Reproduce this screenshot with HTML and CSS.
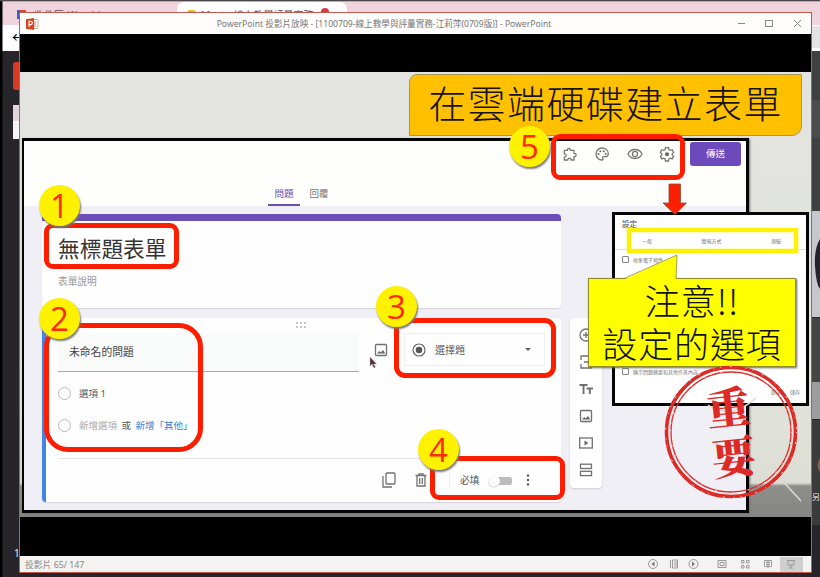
FILE: index.html
```html
<!DOCTYPE html>
<html lang="zh-Hant">
<head>
<meta charset="utf-8">
<title>PowerPoint 投影片放映</title>
<link rel="stylesheet" href="styles.css">
</head>
<body>
<div class="desktop">
  <div class="browser">
    <div class="tabs-strip">
      <div class="btab"><i class="fav mail"></i><span>收件匣 (1) - chiang</span><b>✕</b></div>
      <div class="btab active"><i class="fav meet"></i><span>Meet - 線上教學評量實務</span><i class="rec"></i><b>✕</b></div>
    </div>
    <div class="nav-strip">←</div>
  </div>
  <svg class="backdrop" width="820" height="577" viewBox="0 0 820 577">
    <rect x="13" y="62" width="12" height="28" rx="3" fill="#d83a25"/>
    <rect x="13" y="105" width="8" height="34" fill="#f6f3f5"/><rect x="13" y="105" width="8" height="16" fill="#e3d5da"/>
    <rect x="811" y="26" width="9" height="22" fill="#e4e4e6"/>
    <rect x="811" y="51" width="9" height="160" fill="#3f4040"/><rect x="811" y="100" width="9" height="38" fill="#4b4c4b"/>
    <rect x="811" y="211" width="9" height="106" fill="#c7c8cd"/><path d="M820 239q-6 10-5 27 1 18 5 23z" fill="#26222b"/>
    <rect x="811" y="318" width="9" height="64" fill="#464546"/><rect x="811" y="382" width="9" height="37" fill="#9c9d9e"/>
    <rect x="811" y="420" width="9" height="105" fill="#3a3b3a"/><path d="M820 458q-5 8 0 14z" fill="#806057"/>
    <rect width="2.5" height="577" fill="#000"/><rect width="820" height="1.3" fill="#4c474b"/>
  </svg>
  <span class="peek left">1</span><span class="peek right">另</span>

  <div class="window">
    <div class="titlebar">
      <svg width="13" height="12" viewBox="0 0 13 12"><rect x="6" y="1.5" width="6" height="9" rx="1" fill="#fff" stroke="#dba08f"/><path d="M8 4h2M8 6h2M8 8h2" stroke="#d4522f" stroke-width=".8"/><path d="M0 1.2 8 0v12L0 10.8z" fill="#d4431f"/><path d="M3 9V3.2h1.6a1.6 1.6 0 0 1 0 3.4H3" fill="none" stroke="#fff" stroke-width="1.1"/></svg>
      <span class="wtitle">PowerPoint 投影片放映 - [1100709-線上教學與評量實務-江莉萍(0709版)] - PowerPoint</span>
      <svg class="wctl" width="66" height="10" viewBox="0 0 66 10" fill="none" stroke="#888" stroke-width="1"><path d="M1 4.500h7M57 1l7 7M64 1l-7 7"/><rect x="28.500" y="1.500" width="7" height="6"/></svg>
    </div>

    <div class="stage">
      <div class="slide">
        <div class="banner">在雲端硬碟建立表單</div>

        <div class="form-shot">
          <div class="form-head">
            <div class="head-tools">
              <svg width="16" height="16" viewBox="0 0 24 24"><path d="M3.500 6.500H8V6a2.300 2.300 0 0 1 4.600 0v.5H18V11h.8a2.400 2.400 0 0 1 0 4.800H18V21h-4.300c0-3.600-5-3.600-5 0H3.500v-4.200c3.700 0 3.700-5 0-5z"/></svg>
              <svg width="16" height="16" viewBox="0 0 24 24"><path d="M12 3a9 9 0 1 0 0 18c1.400 0 2-1.300 1.200-2.300-.9-1.200-.2-2.700 1.300-2.700H17a4.500 4.500 0 0 0 4.500-4.500C21.500 6.700 17.200 3 12 3z"/><g class="solid"><circle cx="6.800" cy="12" r="1.500"/><circle cx="9.500" cy="7.800" r="1.500"/><circle cx="14.500" cy="7.800" r="1.500"/><circle cx="17.500" cy="11.500" r="1.500"/></g></svg>
              <svg width="16" height="16" viewBox="0 0 24 24"><path d="M1.500 12C5.500 3 18.500 3 22.500 12 18.500 21 5.500 21 1.500 12z"/><circle cx="12" cy="12" r="3.800"/></svg>
              <svg width="16" height="16" viewBox="0 0 24 24"><path d="M9.700 2.500h4.600l.6 3 2 1.100 2.800-1 2.300 4-2.200 1.900v2l2.200 1.900-2.300 4-2.800-1-2 1.100-.6 3H9.700l-.6-3-2-1.100-2.800 1-2.300-4 2.200-1.900v-2L2 9.600l2.300-4 2.800 1 2-1.100z"/><circle cx="12" cy="12.500" r="3" class="solid"/></svg>
              <span class="send">傳送</span>
            </div>
            <div class="form-tabs"><span class="on">問題</span><span>回覆</span></div>
          </div>
          <div class="form-body">
            <div class="cards">
              <div class="card title-card"><div class="form-title">無標題表單</div><div class="form-desc">表單說明</div></div>
              <div class="card question">
                <svg class="grip" width="12" height="6" viewBox="0 0 12 6"><g fill="#aaa"><circle cx="2" cy="1" r=".9"/><circle cx="6" cy="1" r=".9"/><circle cx="10" cy="1" r=".9"/><circle cx="2" cy="5" r=".9"/><circle cx="6" cy="5" r=".9"/><circle cx="10" cy="5" r=".9"/></g></svg>
                <div class="q-row">
                  <div class="q-field">未命名的問題</div>
                  <svg class="ico" width="14" height="14" viewBox="0 0 14 14"><rect x="1.500" y="1.500" width="11" height="11" rx="1"/><path class="solid" d="M3 10.500 5.200 8l1.500 1.500L9 7l2.300 3.500z"/></svg>
                  <div class="q-type">
                    <svg width="14" height="14" viewBox="0 0 14 14"><circle cx="7" cy="7" r="6" fill="none" stroke="#666" stroke-width="1.200"/><circle cx="7" cy="7" r="3.300" fill="#555"/></svg>
                    <span>選擇題</span><i></i>
                  </div>
                </div>
                <div class="opt"><i></i><span>選項 1</span></div>
                <div class="opt second"><i></i><span class="muted">新增選項</span><span>或</span><span class="link">新增「其他」</span></div>
                <div class="q-foot">
                  <svg class="ico" width="14" height="16" viewBox="0 0 14 16"><rect x="4" y="1" width="9" height="11" rx="1"/><path d="M1 4v11h9"/></svg>
                  <svg class="ico trash" width="12" height="14" viewBox="0 0 12 14"><path d="M.5 2.500h11M4 2V.8h4V2M2 3v10h8V3M4.700 5v6M7.300 5v6"/></svg>
                  <span class="req">必填</span>
                  <svg class="toggle" width="26" height="14" viewBox="0 0 26 14"><rect x="5" y="3" width="20" height="8" rx="2.500" fill="#bcbcbc"/><circle cx="7" cy="7.600" r="6" fill="#ccc"/><circle cx="7" cy="7" r="5.800" fill="#fbfbfb"/></svg>
                  <svg width="4" height="12" viewBox="0 0 4 12" fill="#555"><circle cx="2" cy="1.500" r="1.200"/><circle cx="2" cy="6" r="1.200"/><circle cx="2" cy="10.500" r="1.200"/></svg>
                </div>
              </div>
            </div>
            <div class="side-tools">
              <svg class="ico" width="14" height="14" viewBox="0 0 14 14"><circle cx="7" cy="7" r="6"/><path d="M7 4v6M4 7h6"/></svg>
              <svg class="ico" width="14" height="14" viewBox="0 0 14 14"><path d="M2 5V1h8v2M2 9v4h10V9M5 7h6M9 4.500 11.500 7 9 9.500"/></svg>
              <svg class="ico" width="14" height="14" viewBox="0 0 14 14"><path stroke-width="1.900" d="M.5 3h8M4.500 3v9M7.500 6.500H14M10.800 6.500V12"/></svg>
              <svg class="ico" width="14" height="14" viewBox="0 0 14 14"><rect x="1.500" y="1.500" width="11" height="11" rx="1"/><path class="solid" d="M3 10.500 5.200 8l1.500 1.500L9 7l2.300 3.500z"/></svg>
              <svg class="ico" width="14" height="14" viewBox="0 0 14 14"><rect x=".7" y="2" width="12.600" height="10"/><path class="solid" d="M5.500 4.500 9.500 7l-4 2.500z"/></svg>
              <svg class="ico" width="14" height="14" viewBox="0 0 14 14"><rect x="1.500" y="1.200" width="11" height="4.300"/><rect x="1.500" y="8.300" width="11" height="4.300"/></svg>
            </div>
          </div>
        </div>

        <div class="settings-shot">
          <div class="s-title">設定</div>
          <div class="s-tabs"><span>一般</span><span>簡報方式</span><span>測驗</span></div>
          <div class="s-check"><i></i>收集電子郵件</div>
          <div class="s-check low"><i></i>顯示問題摘要和其他作答內容</div>
          <div class="s-actions"><span>取消</span><span>儲存</span></div>
        </div>

        <svg class="marks" width="790" height="445" viewBox="20 72 790 445">
          <path d="M669 184h11.500v19h6L675 214.500 663 203h6z" fill="#ff1e00" stroke="#8d4a35" stroke-width=".8"/>
          <rect x="629" y="230" width="167" height="21" fill="none" stroke="#fff200" stroke-width="4.500"/>
          <path d="M370 357v9l2-2 2 4 1.500-1-2-3h3z" fill="#50333f" stroke="#b599a3" stroke-width=".4"/>
        </svg>
        <div class="frame f1"></div><div class="frame f2"></div><div class="frame f3"></div><div class="frame f4"></div><div class="frame f5"></div>
        <div class="num n1">1</div><div class="num n2">2</div><div class="num n3">3</div><div class="num n4">4</div><div class="num n5">5</div>

        <div class="callout">
          <svg width="56" height="26" viewBox="0 0 56 26"><path d="M1 26 55 1l-1 25z" fill="#ff0"/><path d="M1 25 55 1l-1 24" fill="none" stroke="#8d8b2c" stroke-width=".8"/></svg>
          <div>注意!!</div><div>設定的選項</div>
        </div>

        <svg class="stamp" width="140" height="140" viewBox="661 362 140 140">
          <path d="M708 405q22 16 48-7M776 474l26 28" fill="none" stroke="#dcdcd5" stroke-width="1.500"/>
          <g fill="none" stroke="#dc2b27"><circle cx="731" cy="432" r="64.500" stroke-width="3.600"/><circle cx="731" cy="432" r="60" stroke-width="1.300"/></g>
          <g fill="none" stroke="#f3dedc" stroke-width="1" stroke-dasharray="1 9 2 14 1 6"><circle cx="731" cy="432" r="65.500"/><circle cx="731" cy="432" r="60.500"/></g>
          <g class="stamp-text" transform="rotate(-6 731 432)"><text x="731" y="424">重</text><text x="731" y="474">要</text></g>
        </svg>
      </div>
    </div>

    <div class="statusbar">
      <span>投影片 65/ 147</span>
      <svg width="168" height="15" viewBox="643 557 168 15" fill="none" stroke="#999">
        <rect x="780" y="557" width="23" height="15" fill="#d0cfcf" stroke="none"/>
        <circle cx="653" cy="564" r="4.500"/><path d="M654.500 561.500 651.500 564l3 2.500z" fill="#777" stroke="none"/>
        <path d="M670.500 560v8M672.500 560h5v8h-5zM674 562h3M674 564h3M674 566h3"/>
        <circle cx="693.500" cy="564" r="4.500"/><path d="M692 561.500 695 564l-3 2.500z" fill="#777" stroke="none"/>
        <path d="M718 560.500h8v7h-8zM720 562.500v3h4v-3zM741.500 560.500h2.500v2.500h-2.500zM746.500 560.500h2.500v2.500h-2.500zM741.500 565.500h2.500v2.500h-2.500zM746.500 565.500h2.500v2.500h-2.500zM764.500 560.500h7v6h-7zM766 562.500h4M766 564.500h4M768 560v8M787 560.500h8M788 561v4h6v-4M791 565v3M789 568h4"/>
      </svg>
    </div>
  </div>
</div>
</body>
</html>
```
FILE: styles.css
```css
* { box-sizing: border-box; }
body { margin: 0; font-family: "Noto Sans", "Noto Sans CJK TC", sans-serif; }
svg { display: block; flex: none; }
i { font-style: normal; display: block; flex: none; }

.desktop { position: relative; width: 820px; height: 577px; overflow: hidden; background: #28252a; }
.tabs-strip { display: flex; height: 25px; padding: 2px 0 0 7px; background: #efd4de; }
.btab { display: flex; gap: 8px; height: 23px; width: 170px; padding: 6px 10px; font-size: 10px; line-height: 14px; color: #555; white-space: nowrap; }
.btab span { flex: 1; }
.btab b { font-weight: 400; }
.btab.active { background: #fff; border-radius: 7px 7px 0 0; padding-right: 6px; gap: 5px; }
.btab.active b { font-size: 8px; }
.fav { width: 9px; height: 9px; margin-top: 2px; }
.mail { background: linear-gradient(90deg, #4259c4 35%, #d9472f 35%); }
.meet { background: #e9b91c; border-radius: 3px; }
.rec { width: 8px; height: 8px; border-radius: 50%; background: #d93a44; }
.nav-strip { height: 26px; padding-left: 12px; background: #fff; font-size: 14px; line-height: 24px; }
.backdrop { position: absolute; left: 0; top: 0; }
.peek { position: absolute; color: #eee; font-size: 10px; }
.peek.left { left: 14px; top: 546px; }
.peek.right { left: 812px; top: 491px; font-size: 8px; }

.window { position: absolute; left: 19px; top: 12px; width: 793px; height: 561px; border: 1px solid #c4574b; display: flex; flex-direction: column; background: #000; }
.titlebar { height: 21px; padding: 0 8px 0 6px; display: flex; align-items: center; justify-content: space-between; background: #fefdfb; flex: none; }
.wtitle { font-size: 8.600px; color: #777; white-space: nowrap; width: 336px; margin-left: -8px; text-align: center; display: flex; justify-content: center; }
.stage { flex: 1; padding: 38px 0 39px; background: #000; }
.slide { position: relative; height: 445px; overflow: hidden; background: linear-gradient(#e3e4e1, #e0e2da 80%, #dcded6 411px, #8e8f8a 414px, #858683); }
.statusbar { height: 16px; flex: none; display: flex; align-items: center; justify-content: space-between; padding-left: 5px; background: #f4f3f2; color: #888; font-size: 8.800px; white-space: nowrap; }

.banner { position: absolute; left: 389px; top: 2px; width: 393px; height: 62px; background: #ffc000; border: 1px solid #a89652; border-radius: 8px 0 10px 0; font: 300 38px/54px "Noto Sans CJK TC", sans-serif; letter-spacing: 1.400px; text-align: center; color: #17120a; white-space: nowrap; }

.form-shot { position: absolute; left: 2px; top: 66px; width: 727px; height: 375px; border: 3px solid #050505; border-left-width: 2px; display: flex; flex-direction: column; background: #f0eff6; box-shadow: 1px 1px 2px #777; }
.form-head { height: 65px; flex: none; background: #fefefd; display: flex; flex-direction: column; justify-content: space-between; }
.head-tools { display: flex; align-items: center; justify-content: flex-end; gap: 16.300px; padding: 1px 5px 0 0; }
.head-tools svg { fill: none; stroke: #757575; stroke-width: 1.900; }
.solid, .head-tools .solid, .ico .solid { fill: #666; stroke: none; }
.send { width: 51px; height: 24px; margin-left: -1.300px; border-radius: 3px; background: #6c4abb; color: #fff; font-size: 9.500px; line-height: 24px; text-align: center; }
.form-tabs { display: flex; padding-left: 244px; gap: 3px; font-size: 9.500px; line-height: 20px; color: #777; }
.form-tabs span { width: 32px; height: 22px; text-align: center; }
.form-tabs .on { color: #6b50b4; border-bottom: 2px solid #6b50b4; }
.form-body { flex: 1; display: flex; padding: 8px 0 0 18px; gap: 9px; }
.cards { width: 519px; display: flex; flex-direction: column; gap: 10px; }
.card { background: #fefefe; border-radius: 4px; box-shadow: 0 1px 1px #d5d4da; }
.title-card { height: 94px; border-top: 7px solid #6c4eb8; padding: 12px 16px; white-space: nowrap; }
.form-title { font-size: 21.700px; line-height: 32px; color: #333; }
.form-desc { font-size: 9.700px; line-height: 16px; margin-top: 9px; color: #999; }
.question { height: 184px; border-left: 4px solid #4285e8; padding: 0 0 0 12px; display: flex; flex-direction: column; }
.grip { margin: 4px 0 0 237px; }
.q-row { display: flex; height: 39px; margin-top: 5px; }
.q-field { width: 301px; height: 39px; padding-left: 11px; line-height: 38px; background: #f9fafa; border-bottom: 1px solid #aaa; font-size: 10.800px; color: #444; }
.ico { fill: none; stroke: #707070; stroke-width: 1.300; }
.q-row > .ico { margin: 10px 0 0 15px; }
.q-type { width: 141px; height: 33px; margin: 0 0 0 16px; padding: 0 13px 0 7px; border: 1px solid #eee; display: flex; align-items: center; gap: 9px; font-size: 10px; color: #555; }
.q-type i { margin-left: auto; border: 3.500px solid transparent; border-top-color: #666; border-bottom: 0; }
.opt { display: flex; align-items: center; height: 16px; margin-top: 13px; font-size: 9.500px; color: #555; white-space: nowrap; }
.opt i { width: 13px; height: 13px; border: 1px solid #bbb; border-radius: 50%; margin-right: 8px; }
.opt.second { margin-top: 16px; }
.opt span + span { margin-left: 4.500px; }
.opt .muted { color: #aaa; }
.opt .link { color: #3c82d3; }
.q-foot { display: flex; align-items: center; height: 42px; margin: 25px 22px 0 0; border-top: 1px solid #e7e7e7; padding-left: 324px; }
.trash { margin-left: 19px; }
.req { font-size: 9.700px; color: #555; margin-left: 22px; padding-left: 10px; border-left: 1px solid #eee; }
.toggle { margin: 2px 13px 0 8px; }
.side-tools { width: 32px; height: 170px; margin-top: 104px; background: #fff; border-radius: 4px; box-shadow: 0 1px 2px #ccc; display: flex; flex-direction: column; align-items: center; gap: 13px; padding-top: 10px; }

.settings-shot { position: absolute; left: 592px; top: 140px; width: 197px; height: 194px; background: #fff; border: 3px solid #050505; white-space: nowrap; color: #777; display: flex; flex-direction: column; }
.s-title { font-size: 7.500px; line-height: 12px; padding: 3px 0 0 7px; color: #444; }
.s-tabs { display: flex; justify-content: space-between; height: 20px; padding: 0 25px 0 27px; font-size: 5px; line-height: 22px; border-bottom: 1px solid #ddd; }
.s-check { display: flex; align-items: center; gap: 4px; height: 10px; margin: 4px 0 0 7px; font-size: 5px; }
.s-check i { width: 7px; height: 7px; border: 1px solid #888; border-radius: 1px; }
.s-check.low { margin-top: 102px; }
.s-actions { display: flex; justify-content: flex-end; gap: 9px; padding: 12px 6px 0; font-size: 5px; }
.marks { position: absolute; left: 0; top: 0; }

.frame { position: absolute; border: 5px solid #ff1d00; border-radius: 9px; }
.f1 { left: 24px; top: 151px; width: 135px; height: 46px; }
.f2 { left: 24px; top: 251px; width: 159px; height: 129px; border-radius: 24px; }
.f3 { left: 374px; top: 246px; width: 162px; height: 60px; border-radius: 11px; }
.f4 { left: 410px; top: 384px; width: 135px; height: 44px; }
.f5 { left: 531px; top: 62px; width: 134px; height: 46px; }
.num { position: absolute; width: 41px; height: 41px; border-radius: 50%; background: #fff200; box-shadow: 1px 2px 2px #777; color: #ff2a00; font: 33px/42px "Open Sans", sans-serif; text-align: center; }
.n1 { left: 19px; top: 113px; }
.n2 { left: 19px; top: 226px; }
.n3 { left: 356px; top: 214px; }
.n4 { left: 398px; top: 357px; }
.n5 { left: 489px; top: 54px; }

.callout { position: absolute; left: 568px; top: 206px; width: 208px; height: 89px; background: #ff0; border: 1px solid #8d8b2c; box-shadow: 1px 1px 2px #666; font: 300 35px/42.500px "Noto Sans CJK TC", sans-serif; color: #111; text-align: center; white-space: nowrap; letter-spacing: .900px; }
.callout svg { position: absolute; left: 33px; top: -25px; }
.stamp { position: absolute; left: 641px; top: 290px; }
.stamp-text { font: 900 44px "Noto Serif CJK TC", "Noto Sans CJK TC", serif; fill: #dc2b27; text-anchor: middle; }
```
